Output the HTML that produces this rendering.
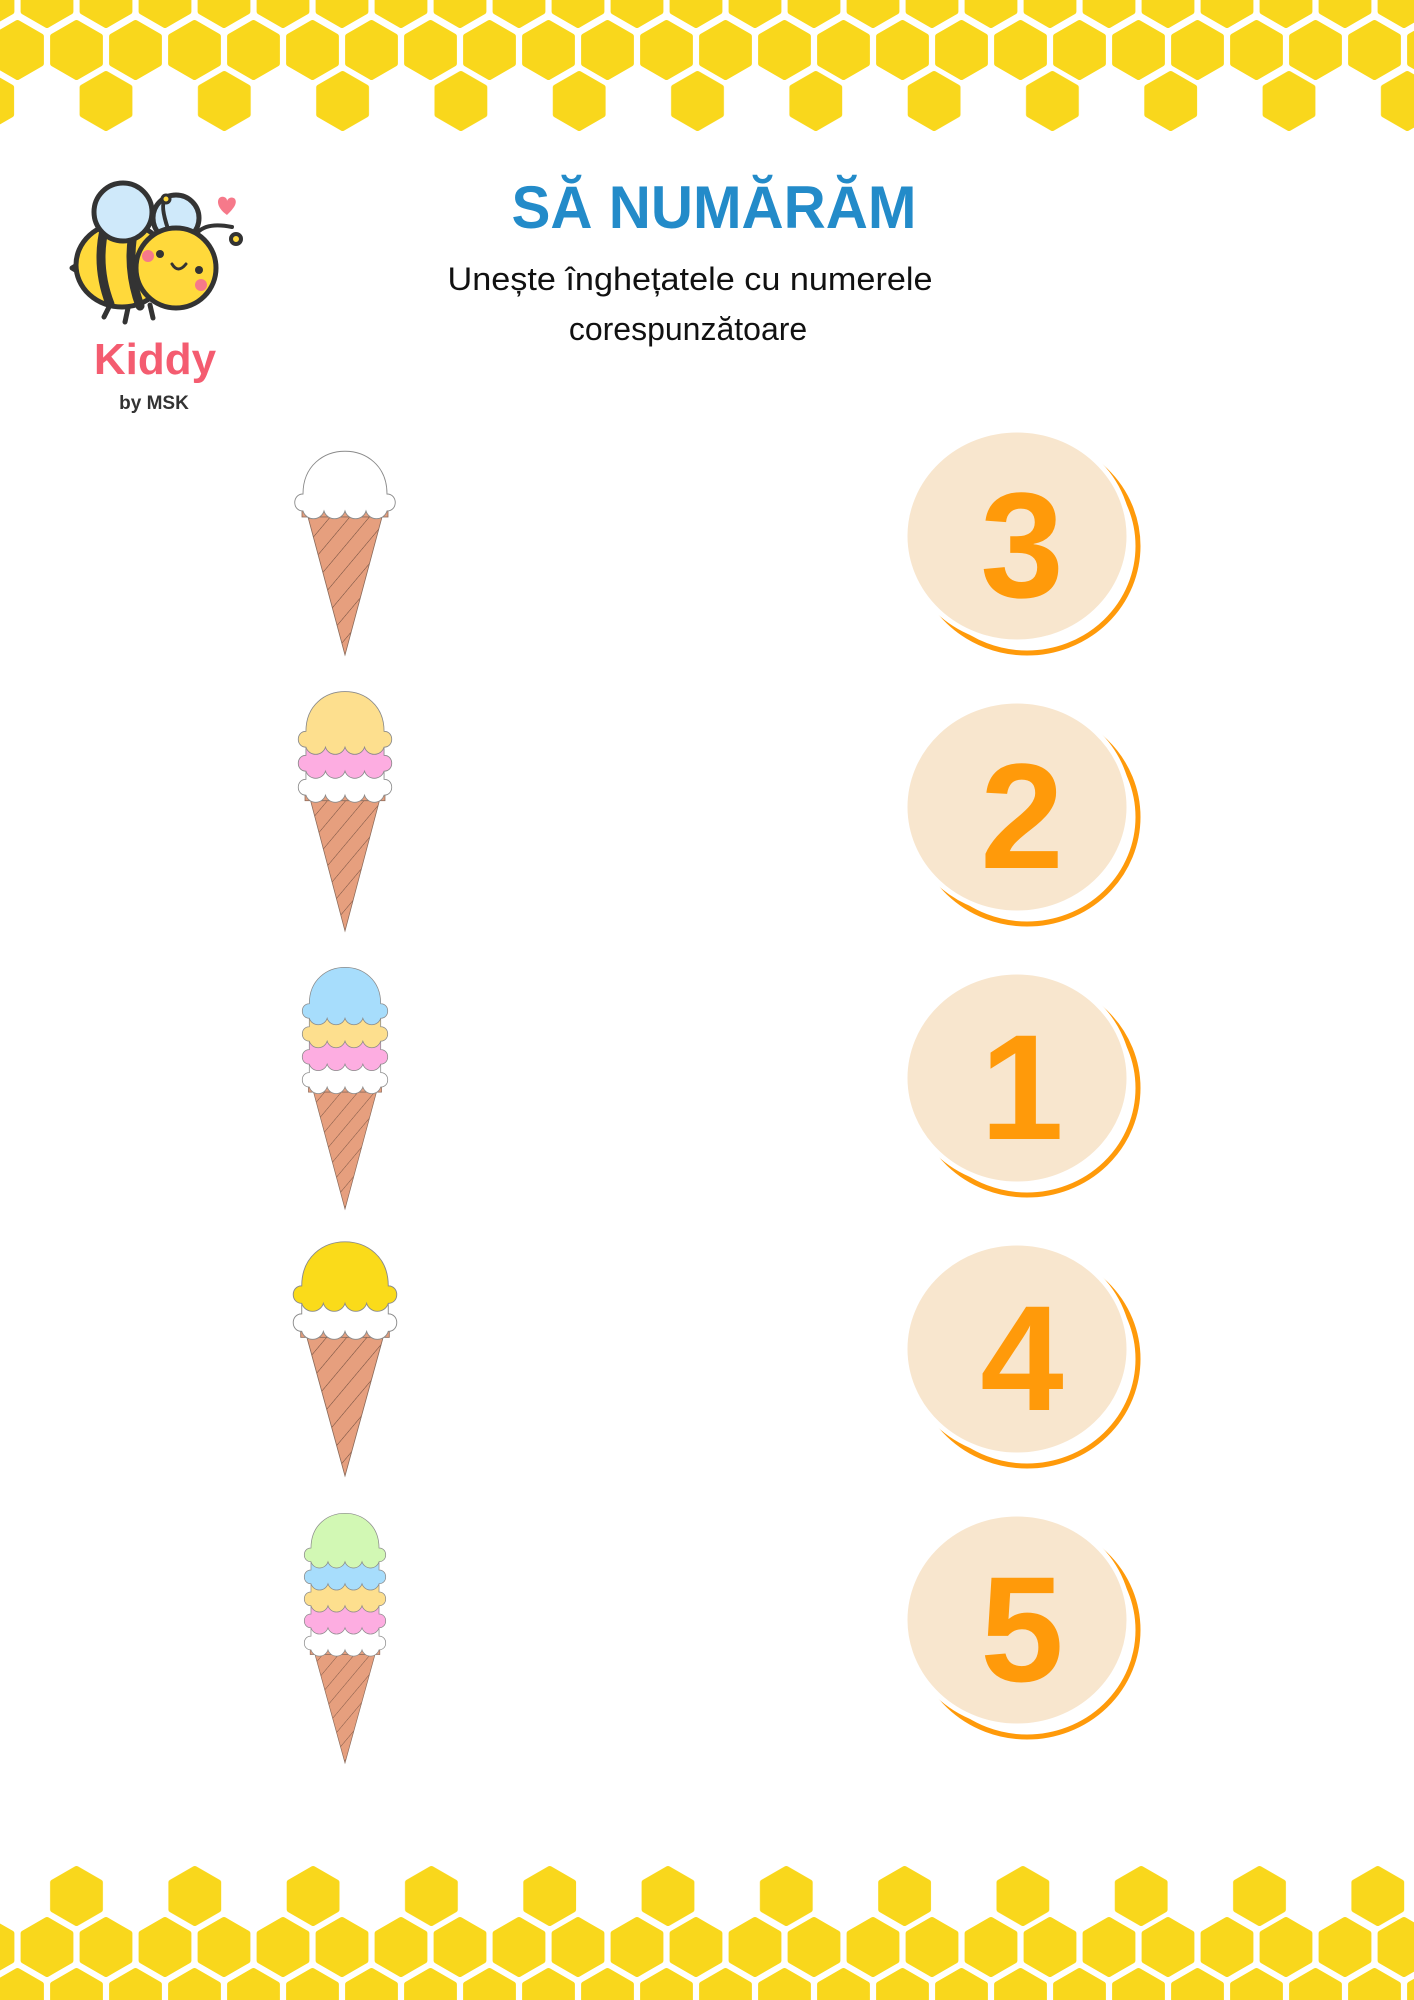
<!DOCTYPE html>
<html><head><meta charset="utf-8">
<style>
html,body{margin:0;padding:0;background:#fff;}
body{width:1414px;height:2000px;position:relative;overflow:hidden;}
svg{position:absolute;left:0;top:0;}
</style></head>
<body>
<svg width="1414" height="2000" viewBox="0 0 1414 2000" xmlns="http://www.w3.org/2000/svg">
<defs>
  <polygon id="hx" points="0,-27 23.4,-13.5 23.4,13.5 0,27 -23.4,13.5 -23.4,-13.5" fill="#F9D71C" stroke="#F9D71C" stroke-width="6" stroke-linejoin="round"/>
  <pattern id="pA" patternUnits="userSpaceOnUse" x="0" y="0" width="59" height="2000">
    <use href="#hx" x="47" y="-2"/><use href="#hx" x="-12" y="-2"/><use href="#hx" x="106" y="-2"/>
    <use href="#hx" x="17.5" y="50"/><use href="#hx" x="76.5" y="50"/>
  </pattern>
  <pattern id="pB" patternUnits="userSpaceOnUse" x="0" y="0" width="118.3" height="2000">
    <use href="#hx" x="106" y="101"/><use href="#hx" x="-12.3" y="101"/>
  </pattern>
  <pattern id="pC" patternUnits="userSpaceOnUse" x="0" y="0" width="59" height="2000">
    <use href="#hx" x="47" y="1947"/><use href="#hx" x="-12" y="1947"/>
    <use href="#hx" x="17.5" y="1998"/><use href="#hx" x="76.5" y="1998"/>
  </pattern>
  <pattern id="pD" patternUnits="userSpaceOnUse" x="0" y="0" width="118.3" height="2000">
    <use href="#hx" x="76.5" y="1896"/>
  </pattern>
  <path id="top" d="M -42,-5 C -42,-62 42,-62 42,-5 C 53,-5 53,12 42,12 A11 11 0 0 1 21 12 A11 11 0 0 1 0 12 A11 11 0 0 1 -21 12 A11 11 0 0 1 -42 12 C -53,12 -53,-5 -42,-5 Z" stroke="#8a8a8a" stroke-width="0.9"/>
  <path id="band" d="M -42,-24 L 42,-24 L 42,-5 C 53,-5 53,12 42,12 A11 11 0 0 1 21 12 A11 11 0 0 1 0 12 A11 11 0 0 1 -21 12 A11 11 0 0 1 -42 12 C -53,12 -53,-5 -42,-5 Z" stroke="#8a8a8a" stroke-width="0.9"/>
  <pattern id="hatch" patternUnits="userSpaceOnUse" width="15" height="15" patternTransform="rotate(40)">
    <rect width="15" height="15" fill="#E69F7E"/>
    <line x1="0" y1="0" x2="0" y2="15" stroke="#6b4a3c" stroke-width="1"/>
  </pattern>
</defs>

<rect x="0" y="0" width="1414" height="140" fill="url(#pA)"/>
<rect x="0" y="0" width="1414" height="140" fill="url(#pB)"/>
<rect x="0" y="1850" width="1414" height="150" fill="url(#pD)"/>
<rect x="0" y="1850" width="1414" height="150" fill="url(#pC)"/>

<!-- Bee logo -->
<g stroke="#333" stroke-width="5" stroke-linejoin="round" stroke-linecap="round">
  <path d="M 82,262 L 72,268 L 82,274 Z" fill="#333"/>
  <ellipse cx="122" cy="265" rx="46" ry="42" fill="#FFD93B"/>
  <path d="M 105,226 Q 95,265 110,304" fill="none" stroke-width="9"/>
  <path d="M 135,224 Q 125,265 140,306" fill="none" stroke-width="9"/>
  <path d="M 110,305 l -6,12 M 128,308 l -3,14 M 150,305 l 3,13" fill="none"/>
  <circle cx="123" cy="212" r="29" fill="#CFE9FA"/>
  <circle cx="176" cy="218" r="23" fill="#CFE9FA"/>
  <circle cx="176" cy="268" r="40" fill="#FFD93B"/>
  <path d="M 198,232 Q 208,222 232,227" fill="none" stroke-width="4"/>
  <circle cx="236" cy="239" r="5" fill="#FFD93B" stroke-width="4"/>
  <path d="M 168,229 Q 160,205 165,200" fill="none" stroke-width="4"/>
  <circle cx="166" cy="199" r="4" fill="#FFD93B" stroke-width="3"/>
</g>
<circle cx="160" cy="254" r="4" fill="#333"/>
<circle cx="199" cy="270" r="4" fill="#333"/>
<path d="M 172,264 Q 178,274 186,264" fill="none" stroke="#333" stroke-width="3" stroke-linecap="round"/>
<circle cx="148" cy="256" r="6" fill="#F6798A"/>
<circle cx="201" cy="285" r="6" fill="#F6798A"/>
<path d="M 227,215 C 214,206 217,195 224,197 C 227,198 227,200 227,201 C 228,198 232,196 235,199 C 238,204 232,210 227,215 Z" fill="#F6798A"/>
<text x="155" y="374" text-anchor="middle" font-family="Liberation Sans, sans-serif" font-weight="bold" font-size="44" fill="#F45C70">Kiddy</text>
<text x="154" y="409" text-anchor="middle" font-family="Liberation Sans, sans-serif" font-weight="bold" font-size="19" fill="#333">by MSK</text>

<!-- Title -->
<text x="714" y="228" text-anchor="middle" font-family="Liberation Sans, sans-serif" font-weight="bold" font-size="60" fill="#238BC9" textLength="405" lengthAdjust="spacingAndGlyphs">SĂ NUMĂRĂM</text>
<text x="690" y="290" text-anchor="middle" font-family="Liberation Sans, sans-serif" font-size="32" fill="#111" textLength="485" lengthAdjust="spacingAndGlyphs">Unește înghețatele cu numerele</text>
<text x="688" y="340" text-anchor="middle" font-family="Liberation Sans, sans-serif" font-size="32" fill="#111">corespunzătoare</text>

<!-- Ice creams -->
<g transform="translate(345,499) scale(1)">
  <rect x="-43" y="6" width="86" height="12" fill="#E69F7E" stroke="#8a6a5a" stroke-width="0.8"/>
  <polygon points="-37,18 37,18 0,156" fill="url(#hatch)" stroke="#8a6a5a" stroke-width="0.8"/>
  <use href="#top" fill="#FFFFFF"/>
</g>
<g transform="translate(345,736) scale(0.93)">
  <rect x="-43" y="57.6" width="86" height="12" fill="#E69F7E" stroke="#8a6a5a" stroke-width="0.8"/>
  <polygon points="-37,69.6 37,69.6 0,209.7" fill="url(#hatch)" stroke="#8a6a5a" stroke-width="0.8"/>
  <use href="#band" y="51.6" fill="#FFFFFF"/>
  <use href="#band" y="25.8" fill="#FDADE1"/>
  <use href="#top" fill="#FDDF8E"/>
</g>
<g transform="translate(345,1008) scale(0.85)">
  <rect x="-43" y="87" width="86" height="12" fill="#E69F7E" stroke="#8a6a5a" stroke-width="0.8"/>
  <polygon points="-37,99 37,99 0,236.5" fill="url(#hatch)" stroke="#8a6a5a" stroke-width="0.8"/>
  <use href="#band" y="81" fill="#FFFFFF"/>
  <use href="#band" y="54" fill="#FDADE1"/>
  <use href="#band" y="27" fill="#FDDF8E"/>
  <use href="#top" fill="#A7DDFC"/>
</g>
<g transform="translate(345,1291) scale(1.03)">
  <rect x="-43" y="33" width="86" height="12" fill="#E69F7E" stroke="#8a6a5a" stroke-width="0.8"/>
  <polygon points="-37,45 37,45 0,179.6" fill="url(#hatch)" stroke="#8a6a5a" stroke-width="0.8"/>
  <use href="#band" y="27.2" fill="#FFFFFF"/>
  <use href="#top" fill="#FADB1A"/>
</g>
<g transform="translate(345,1552) scale(0.81)">
  <rect x="-43" y="114.6" width="86" height="12" fill="#E69F7E" stroke="#8a6a5a" stroke-width="0.8"/>
  <polygon points="-37,126.6 37,126.6 0,260.5" fill="url(#hatch)" stroke="#8a6a5a" stroke-width="0.8"/>
  <use href="#band" y="108.8" fill="#FFFFFF"/>
  <use href="#band" y="81.6" fill="#FDADE1"/>
  <use href="#band" y="54.4" fill="#FDDF8E"/>
  <use href="#band" y="27.2" fill="#A7DDFC"/>
  <use href="#top" fill="#D2F8B4"/>
</g>

<!-- Number circles -->
<g font-family="Liberation Sans, sans-serif" font-weight="bold" font-size="150" fill="#FF9A0A" text-anchor="middle">
  <g transform="translate(0,0)">
    <ellipse cx="1027" cy="546" rx="111" ry="107" fill="none" stroke="#FF9A0A" stroke-width="5"/>
    <ellipse cx="1017" cy="536" rx="112" ry="106" fill="#F8E6CE" stroke="#fff" stroke-width="5"/>
    <text x="1022" y="597">3</text>
  </g>
  <g transform="translate(0,271)">
    <ellipse cx="1027" cy="546" rx="111" ry="107" fill="none" stroke="#FF9A0A" stroke-width="5"/>
    <ellipse cx="1017" cy="536" rx="112" ry="106" fill="#F8E6CE" stroke="#fff" stroke-width="5"/>
    <text x="1022" y="597">2</text>
  </g>
  <g transform="translate(0,542)">
    <ellipse cx="1027" cy="546" rx="111" ry="107" fill="none" stroke="#FF9A0A" stroke-width="5"/>
    <ellipse cx="1017" cy="536" rx="112" ry="106" fill="#F8E6CE" stroke="#fff" stroke-width="5"/>
    <text x="1022" y="597">1</text>
  </g>
  <g transform="translate(0,813)">
    <ellipse cx="1027" cy="546" rx="111" ry="107" fill="none" stroke="#FF9A0A" stroke-width="5"/>
    <ellipse cx="1017" cy="536" rx="112" ry="106" fill="#F8E6CE" stroke="#fff" stroke-width="5"/>
    <text x="1022" y="597">4</text>
  </g>
  <g transform="translate(0,1084)">
    <ellipse cx="1027" cy="546" rx="111" ry="107" fill="none" stroke="#FF9A0A" stroke-width="5"/>
    <ellipse cx="1017" cy="536" rx="112" ry="106" fill="#F8E6CE" stroke="#fff" stroke-width="5"/>
    <text x="1022" y="597">5</text>
  </g>
</g>
</svg>
</body></html>
